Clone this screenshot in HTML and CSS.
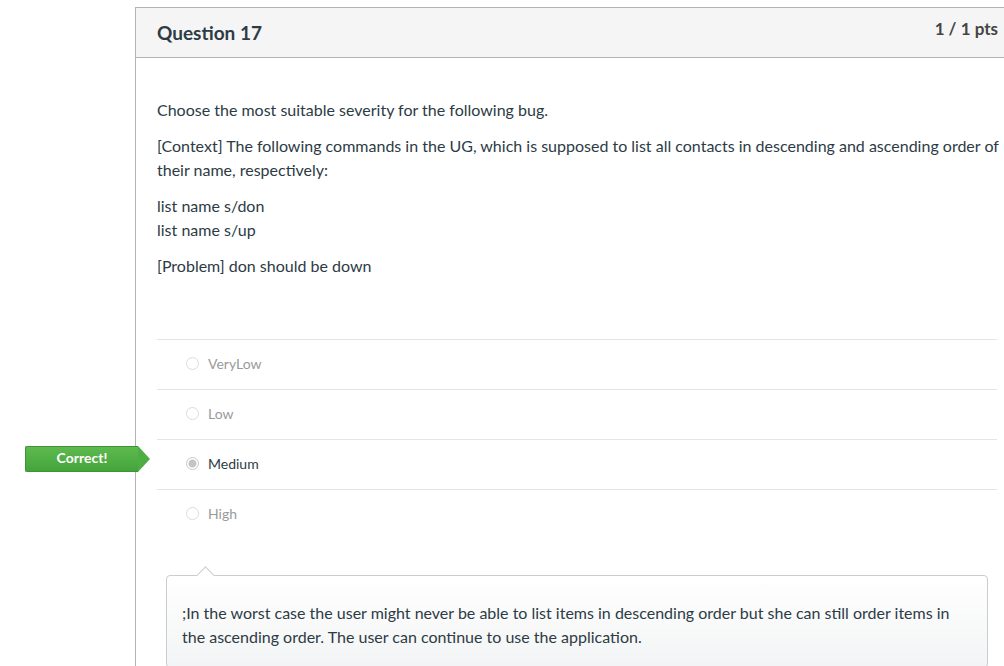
FILE: index.html
```html
<!DOCTYPE html>
<html>
<head>
<meta charset="utf-8">
<link rel="stylesheet" href="styles.css">
</head>
<body>
<div class="page">
  <div class="card">
    <div class="header">
      <h2 class="title">Question 17</h2>
      <div class="pts">1 / 1 pts</div>
    </div>
    <div class="body">
      <div class="qtext">
        <p>Choose the most suitable severity for the following bug.</p>
        <p>[Context] The following commands in the UG, which is supposed to list all contacts in descending and ascending order of their name, respectively:</p>
        <p>list name s/don<br>list name s/up</p>
        <p>[Problem] don should be down</p>
      </div>
      <div class="answers">
        <div class="answer"><span class="radio"></span><span class="label">VeryLow</span></div>
        <div class="answer"><span class="radio"></span><span class="label">Low</span></div>
        <div class="answer selected">
          <div class="badge">Correct!</div>
          <span class="radio"></span><span class="label">Medium</span>
        </div>
        <div class="answer"><span class="radio"></span><span class="label">High</span></div>
      </div>
      <div class="comment">
        <p>;In the worst case the user might never be able to list items in descending order but she can still order items in the ascending order. The user can continue to use the application.</p>
      </div>
    </div>
  </div>
</div>
</body>
</html>
```
FILE: styles.css
```css
html, body {
  margin: 0;
  padding: 0;
  background: #fff;
  overflow: hidden;
}
body {
  font-family: Lato, "Liberation Sans", sans-serif;
  color: #2d3b45;
  width: 1004px;
  height: 666px;
}
.page {
  padding: 7px 0 0 135px;
}
.card {
  width: 874px;
  border: 1px solid #b4b4b4;
  border-bottom: none;
  height: 660px;
}
.header {
  box-sizing: border-box;
  height: 50px;
  background: #f5f5f5;
  border-bottom: 1px solid #b4b4b4;
  display: flex;
  align-items: center;
  justify-content: space-between;
  padding: 0 12px 1px 21px;
}
.title {
  margin: 0;
  font-size: 19px;
  font-weight: 700;
  color: #2d3b45;
}
.pts {
  font-size: 17px;
  font-weight: 700;
  color: #444;
  align-self: flex-start;
  margin-top: 10px;
}
.body {
  padding: 28px 6px 0 21px;
}
.qtext {
  font-size: 16px;
  line-height: 24px;
}
.qtext p {
  margin: 12px 0;
}
.answers {
  margin: 61px 7px 0 0;
}
.answer {
  position: relative;
  border-top: 1px solid #e4e4e4;
  display: flex;
  align-items: center;
  padding-left: 29px;
  padding-bottom: 2px;
  box-sizing: border-box;
  height: 50px;
  font-size: 14px;
  color: #9a9a9a;
}
.answer .radio {
  width: 11px;
  height: 11px;
  border: 1px solid #dcdcdc;
  border-radius: 50%;
  background: #fff;
  margin-right: 9px;
  box-sizing: content-box;
}
.answer.selected {
  color: #2d3b45;
}
.answer.selected .radio {
  border-color: #c8c8c8;
  background: radial-gradient(circle, #c4c4c4 0 3.5px, #fff 4.5px);
}
.badge {
  position: absolute;
  left: -132px;
  top: 6px;
  width: 113px;
  height: 26px;
  box-sizing: border-box;
  background: linear-gradient(#5dba4f, #44a43b);
  border: 1px solid #3f9236;
  border-right: none;
  border-radius: 2px 0 0 2px;
  color: #fff;
  font-size: 14px;
  font-weight: 700;
  line-height: 21px;
  text-align: center;
}
.badge::after {
  content: "";
  position: absolute;
  right: -12px;
  top: -1px;
  width: 0;
  height: 0;
  border-top: 13px solid transparent;
  border-bottom: 13px solid transparent;
  border-left: 12px solid #4eae44;
}
.comment {
  position: relative;
  margin: 36px 16px 0 9px;
  border: 1px solid #c7cdd1;
  border-radius: 4px;
  background: linear-gradient(#ffffff, #f3f4f5);
  padding: 25px 15px 16px 15px;
  font-size: 16px;
  line-height: 24px;
  height: 50px;
}
.comment p {
  margin: 0;
}
.comment::before {
  content: "";
  position: absolute;
  left: 32px;
  top: -7px;
  width: 12px;
  height: 12px;
  background: #fff;
  border-top: 1px solid #c7cdd1;
  border-left: 1px solid #c7cdd1;
  transform: rotate(45deg);
}
```
